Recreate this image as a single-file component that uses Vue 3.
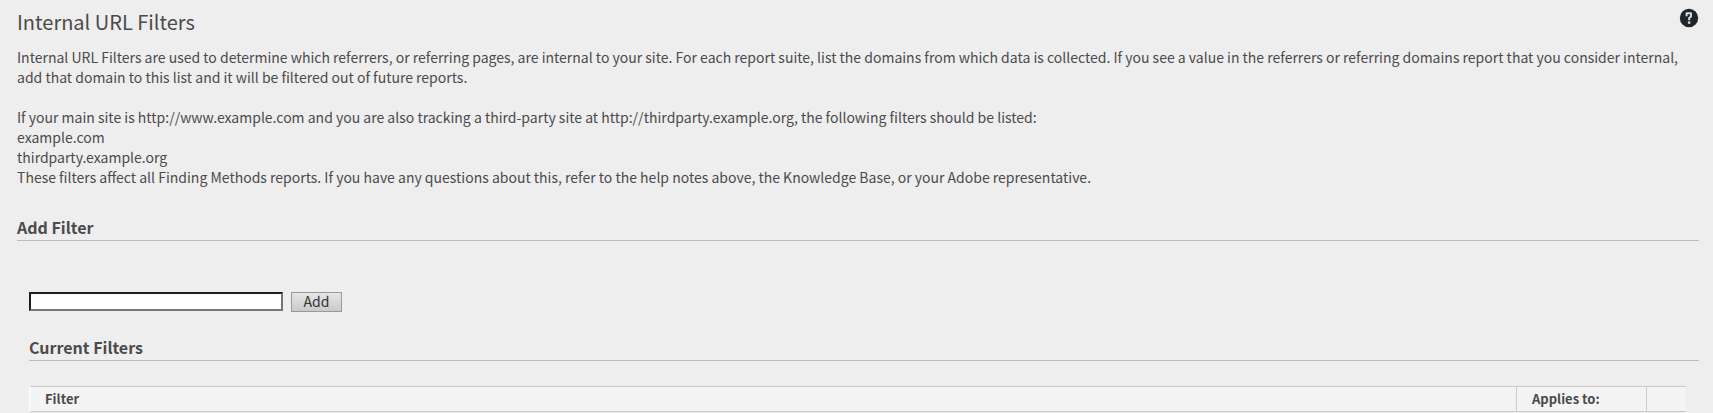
<script setup>
import { ref } from 'vue'

const domain = ref('')
</script>

<template>
  <main class="page">
    <header class="top">
      <h1>Internal URL Filters</h1>
      <button class="help" type="button" aria-label="Help">
        <svg viewBox="0 0 20 20" width="20" height="20" aria-hidden="true">
          <circle cx="10" cy="10" r="9.2" fill="#1f252b" />
          <path d="M7.6 8.2V5.2H12V8.4L10.2 10V12.2" fill="none" stroke="#d5dade" stroke-width="2" stroke-linejoin="round" />
          <rect x="8.9" y="13.4" width="2.4" height="2.4" fill="#d5dade" />
        </svg>
      </button>
    </header>

    <p>Internal URL Filters are used to determine which referrers, or referring pages, are internal to your site. For each report suite, list the domains from which data is collected. If you see a value in the referrers or referring domains report that you consider internal, add that domain to this list and it will be filtered out of future reports.</p>
    <p class="example">
      If your main site is http://www.example.com and you are also tracking a third-party site at http://thirdparty.example.org, the following filters should be listed:<br>
      example.com<br>
      thirdparty.example.org<br>
      These filters affect all Finding Methods reports. If you have any questions about this, refer to the help notes above, the Knowledge Base, or your Adobe representative.
    </p>

    <h2 id="add-title">Add Filter</h2>
    <div class="content">
      <form class="add" @submit.prevent>
        <input v-model="domain" type="text" aria-labelledby="add-title">
        <button type="submit">Add</button>
      </form>

      <h2 id="current-title">Current Filters</h2>
      <table aria-labelledby="current-title">
        <thead>
          <tr>
            <th>Filter</th>
            <th class="applies">Applies to:</th>
            <th class="action"></th>
          </tr>
        </thead>
      </table>
    </div>
  </main>
</template>

<style>
body {
  background: #eee;
}
</style>

<style scoped>
.page {
  padding: 8px 14px 0 17px;
  color: #4b4b4b;
  font: 14px/20px "Noto Sans CJK SC", "Open Sans", sans-serif;
}
.top {
  display: flex;
  justify-content: space-between;
  align-items: flex-start;
  height: 39px;
}
h1 {
  margin: 0;
  font-size: 20px;
  line-height: 28px;
  font-weight: 400;
}
.help {
  padding: 0;
  border: 0;
  background: none;
}
.help svg {
  display: block;
}
p {
  margin: 0 2px 0 0;
}
.example {
  margin-top: 20px;
}
h2 {
  margin: 0;
  padding-bottom: 1px;
  border-bottom: 1px solid #bdbdbd;
  font-size: 16px;
  line-height: 24px;
  font-weight: 700;
}
.example + h2 {
  margin-top: 28px;
}
.content {
  padding: 51px 0 0 12px;
}
.add {
  display: flex;
  align-items: flex-start;
  gap: 8px;
  margin-bottom: 23px;
}
.add input {
  box-sizing: border-box;
  width: 254px;
  height: 19px;
  padding: 0 4px;
  border: 2px solid;
  border-color: #1e1e20 #767676 #767676 #1e1e20;
  background: #fff;
  font: inherit;
}
.add button {
  box-sizing: border-box;
  width: 51px;
  height: 20px;
  padding: 0 0 2px;
  border: 1px solid #999;
  background: linear-gradient(#e6e6e6, #cacaca);
  color: #333;
  font: 14px/16px "Noto Sans CJK SC", "Open Sans", sans-serif;
}
table {
  width: calc(100% - 13px);
  margin-top: 25px;
  table-layout: fixed;
  border-spacing: 0;
  border-left: 1px solid #fff;
}
th {
  box-sizing: border-box;
  height: 26px;
  padding: 0 15px;
  border-top: 1px solid #ccc;
  border-bottom: 1px solid #ccc;
  background: #f4f4f4;
  font-size: 13px;
  line-height: 24px;
  font-weight: 700;
  text-align: left;
}
.applies {
  width: 130px;
  border-left: 1px solid #ccc;
}
.action {
  width: 40px;
  border-left: 1px solid #ccc;
}
</style>
